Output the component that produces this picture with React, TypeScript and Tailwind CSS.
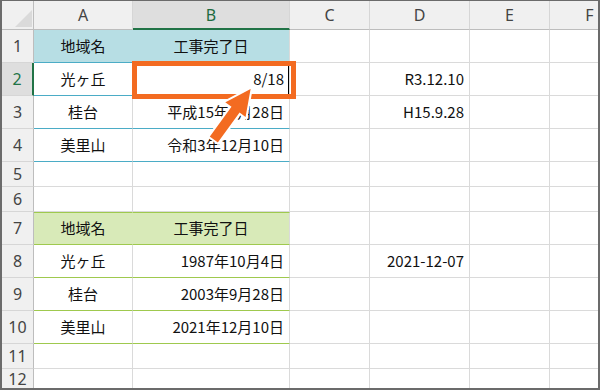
const cellFont = { fontFamily: '"Noto Sans CJK JP", "Noto Sans", sans-serif' };

type Kind = "plain" | "blueHead" | "blue" | "greenHead" | "green";

const kindClass: Record<Kind, string> = {
  plain: "border-r border-b border-[#dadada]",
  blueHead: "border-r border-b border-[#dadada] bg-[#b7dee4] border-b-[#4bacc6]",
  blue: "border-r border-b border-[#dadada] border-b-[#4bacc6]",
  greenHead: "border-r border-b border-[#dadada] bg-[#d8eab8] border-b-[#9fc94e] border-t border-t-[#9fc94e]",
  green: "border-r border-b border-[#dadada] border-b-[#9fc94e]",
};

function Cell({
  kind = "plain",
  align = "center",
  noRight = false,
  children,
}: {
  kind?: Kind;
  align?: "center" | "right";
  noRight?: boolean;
  children?: React.ReactNode;
}) {
  return (
    <div
      className={`${kindClass[kind]} ${noRight ? "border-r-transparent" : ""} flex items-center text-[15px] text-[#111] whitespace-nowrap ${
        align === "right" ? "justify-end pr-[5px]" : "justify-center"
      }`}
      style={cellFont}
    >
      {children}
    </div>
  );
}

function RowHead({ n, active = false }: { n: number; active?: boolean }) {
  return (
    <div
      className={`flex items-center justify-center border-b border-b-[#d6d6d6] text-[16px] leading-none ${
        active
          ? "bg-[#dedede] border-r-2 border-r-[#217346] text-[#217346]"
          : "bg-[#f0f0f0] border-r border-r-[#bdbdbd] text-[#444]"
      }`}
      style={{ fontFamily: '"Noto Sans", sans-serif' }}
    >
      {n}
    </div>
  );
}

function ColHead({ label, active = false }: { label: string; active?: boolean }) {
  return (
    <div
      className={`flex items-center justify-center border-r border-r-[#d6d6d6] text-[16px] ${
        active
          ? "bg-[#dedede] border-b-2 border-b-[#217346] text-[#1d6b41]"
          : "bg-[#f0f0f0] border-b border-b-[#bdbdbd] text-[#444]"
      }`}
      style={{ fontFamily: '"Noto Sans", sans-serif' }}
    >
      {label}
    </div>
  );
}

function Empty({ count = 4 }: { count?: number }) {
  return (
    <>
      {Array.from({ length: count }).map((_, i) => (
        <Cell key={i} />
      ))}
    </>
  );
}

export default function App() {
  return (
    <div className="relative w-[600px] h-[390px] overflow-hidden bg-white border-l-2 border-r-2 border-t border-b-2 border-[#6b6b6b]">
      <div className="grid grid-cols-[32px_99px_157px_80px_100px_80px_80px] grid-rows-[29px_33px_33px_33px_33px_25px_25px_33px_33px_33px_33px_25px_20px]">
        {/* corner */}
        <div className="relative bg-[#f0f0f0] border-r border-b border-r-[#bdbdbd] border-b-[#bdbdbd]">
          <svg className="absolute left-0 top-0" width="32" height="29" viewBox="0 0 32 29">
            <polygon points="30,9 30,26 13,26" fill="#dadada" />
          </svg>
        </div>
        <ColHead label="A" />
        <ColHead label="B" active />
        <ColHead label="C" />
        <ColHead label="D" />
        <ColHead label="E" />
        <ColHead label="F" />

        {/* 1 */}
        <RowHead n={1} />
        <Cell kind="blueHead" noRight>地域名</Cell>
        <Cell kind="blueHead">工事完了日</Cell>
        <Empty />

        {/* 2 */}
        <RowHead n={2} active />
        <Cell kind="blue">光ヶ丘</Cell>
        <Cell kind="blue" align="right">8/18</Cell>
        <Cell />
        <Cell align="right">R3.12.10</Cell>
        <Cell />
        <Cell />

        {/* 3 */}
        <RowHead n={3} />
        <Cell kind="blue">桂台</Cell>
        <Cell kind="blue" align="right">平成15年9月28日</Cell>
        <Cell />
        <Cell align="right">H15.9.28</Cell>
        <Cell />
        <Cell />

        {/* 4 */}
        <RowHead n={4} />
        <Cell kind="blue">美里山</Cell>
        <Cell kind="blue" align="right">令和3年12月10日</Cell>
        <Empty />

        {/* 5, 6 */}
        <RowHead n={5} />
        <Empty count={6} />
        <RowHead n={6} />
        <Empty count={6} />

        {/* 7 */}
        <RowHead n={7} />
        <Cell kind="greenHead" noRight>地域名</Cell>
        <Cell kind="greenHead">工事完了日</Cell>
        <Empty />

        {/* 8 */}
        <RowHead n={8} />
        <Cell kind="green">光ヶ丘</Cell>
        <Cell kind="green" align="right">1987年10月4日</Cell>
        <Cell />
        <Cell align="right">2021-12-07</Cell>
        <Cell />
        <Cell />

        {/* 9 */}
        <RowHead n={9} />
        <Cell kind="green">桂台</Cell>
        <Cell kind="green" align="right">2003年9月28日</Cell>
        <Empty />

        {/* 10 */}
        <RowHead n={10} />
        <Cell kind="green">美里山</Cell>
        <Cell kind="green" align="right">2021年12月10日</Cell>
        <Empty />

        {/* 11, 12 */}
        <RowHead n={11} />
        <Empty count={6} />
        <RowHead n={12} />
        <Empty count={6} />
      </div>

      {/* edit cursor in B2 */}
      <div className="absolute left-[286px] top-[65px] w-px h-[28px] bg-black" />

      {/* highlight frame around B2 */}
      <div className="absolute left-[130px] top-[60px] w-[164px] h-[38px] border-[5px] border-[#f36b21]" />

      {/* pointer arrow */}
      <svg className="absolute left-[-2px] top-[-1px] pointer-events-none" width="600" height="390" viewBox="0 0 600 390">
        <g transform="translate(252 87) rotate(36)">
          <polygon
            points="0,0 14,29 6,29 6,66 -6,66 -6,29 -14,29"
            fill="#f36b21"
            stroke="#fff"
            strokeWidth="2"
            strokeLinejoin="miter"
          />
        </g>
      </svg>
    </div>
  );
}
